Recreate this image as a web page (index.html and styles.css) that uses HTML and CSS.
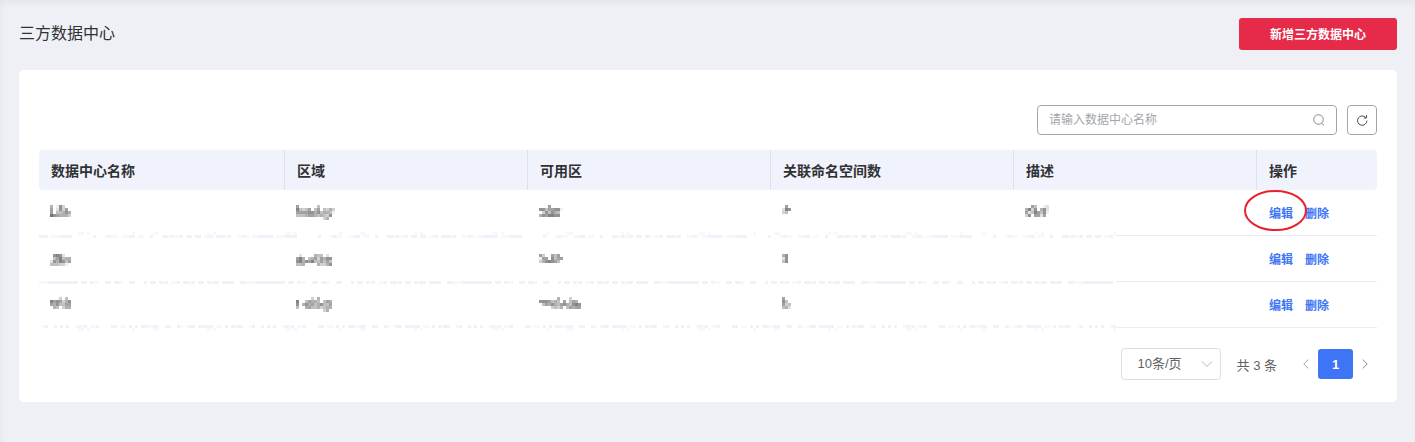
FILE: index.html
```html
<!DOCTYPE html>
<html lang="zh-CN">
<head>
    <meta charset="UTF-8">
    <meta name="viewport" content="width=device-width, initial-scale=1.0">
    <title>三方数据中心</title>
    <link rel="stylesheet" href="styles.css">
</head>
<body>
    <header class="page-header">
        <h1>三方数据中心</h1>
        <button class="btn-primary" type="button">新增三方数据中心</button>
    </header>

    <main class="card">
        <div class="toolbar">
            <div class="search">
                <input type="text" aria-label="数据中心名称" placeholder="请输入数据中心名称">
                <svg width="12" height="12" viewBox="0 0 12 12" fill="none" stroke="#85888f">
                    <circle cx="5.5" cy="5.5" r="4.8"/>
                    <path d="M8.6 9.4l2.4 1.8"/>
                </svg>
            </div>
            <button class="btn-refresh" type="button" aria-label="刷新">
                <svg width="12" height="12" viewBox="0 0 12 12" fill="none" stroke="#4c4f55">
                    <path d="M10.9 6.6A4.7 4.7 0 1 1 9.8 3.6"/>
                    <path d="M10.5 1.2v2.8H7.8"/>
                </svg>
            </button>
        </div>

        <table>
            <thead>
                <tr>
                    <th class="col-name">数据中心名称</th>
                    <th>区域</th>
                    <th>可用区</th>
                    <th>关联命名空间数</th>
                    <th>描述</th>
                    <th class="col-action">操作</th>
                </tr>
            </thead>
            <tbody>
                <tr>
                    <td data-mosaic="5017300 6027360 6044575 9765553"><div class="strip"></div></td>
                    <td data-mosaic="6000000400000 8434604604353 6666775745541 4445665454370 0000000003500"></td>
                    <td data-mosaic="00060000 77466771 03747540 57688770"></td>
                    <td data-mosaic="060 287 340"></td>
                    <td data-mosaic="00640012 58370572 62486471 37066260"></td>
                    <td class="actions">
                        <a href="#">编辑</a><a href="#">删除</a>
                        <svg class="mark" width="64" height="42" viewBox="0 0 64 42" fill="none" stroke="#e8202b" stroke-width="2">
                            <ellipse cx="31.5" cy="20.5" rx="30.5" ry="19.5"/>
                        </svg>
                    </td>
                </tr>
                <tr>
                    <td data-mosaic="0000000 0787200 0468455 2758746 4443310"><div class="strip"></div></td>
                    <td data-mosaic="000000000000 020000544020 685045636577 785768446464 445000053357"></td>
                    <td data-mosaic="00000000 63006460 16607466 35787640"></td>
                    <td data-mosaic="000 570 270 470"></td>
                    <td></td>
                    <td class="actions"><a href="#">编辑</a><a href="#">删除</a></td>
                </tr>
                <tr>
                    <td data-mosaic="0003040 8676357 6574466 0540355"><div class="strip strip-last"></div></td>
                    <td data-mosaic="000003050000 800465540465 705756457446 400564453455 000000000350"></td>
                    <td data-mosaic="000000500030000 777645406046500 046575467547870 000034350465660"></td>
                    <td data-mosaic="600 740 634 452"></td>
                    <td></td>
                    <td class="actions"><a href="#">编辑</a><a href="#">删除</a></td>
                </tr>
            </tbody>
        </table>

        <div class="pagination">
            <div class="page-size">
                <select aria-label="每页条数">
                    <option>10条/页</option>
                </select>
                <svg width="12" height="8" viewBox="0 0 12 8" fill="none" stroke="#b0b3ba">
                    <path d="M1 1.5l5 5 5-5"/>
                </svg>
            </div>
            <span class="total">共 3 条</span>
            <button class="arrow" type="button" aria-label="上一页">
                <svg width="6" height="10" viewBox="0 0 6 10" fill="none" stroke="#a0a3aa">
                    <path d="M5.2 0.6L0.8 5l4.4 4.4"/>
                </svg>
            </button>
            <button class="page-current" type="button">1</button>
            <button class="arrow" type="button" aria-label="下一页">
                <svg width="6" height="10" viewBox="0 0 6 10" fill="none" stroke="#85888f">
                    <path d="M0.8 0.6L5.2 5 0.8 9.4"/>
                </svg>
            </button>
        </div>
    </main>

    <script src="mosaic.js"></script>
</body>
</html>
```

FILE: styles.css
```css
* {
    box-sizing: border-box;
}
body {
    margin: 0;
    min-height: 100vh;
    padding: 18px 18px 40px 19px;
    background-color: #eff0f5;
    box-shadow: inset 2px 4px 10px -4px rgba(0, 0, 0, 0.08);
    font-family: "Liberation Sans", "Noto Sans CJK SC", sans-serif;
    font-size: 13px;
    color: #303133;
}
button, input, select {
    font-family: inherit;
}
button {
    cursor: pointer;
}
.page-header {
    display: flex;
    justify-content: space-between;
    align-items: center;
    margin-bottom: 20px;
}
h1 {
    margin: 0;
    font-size: 16px;
    font-weight: 400;
    line-height: 24px;
}
.btn-primary {
    height: 32px;
    padding: 0 31px 2px;
    border: none;
    border-radius: 3px;
    background-color: #e52b49;
    color: #fff;
    font-size: 12px;
    font-weight: 700;
}
.card {
    padding: 35px 20px 22px;
    border-radius: 5px;
    background-color: #fff;
}
.toolbar {
    display: flex;
    justify-content: flex-end;
    gap: 10px;
    margin-bottom: 15px;
}
.search {
    display: flex;
    align-items: center;
    width: 300px;
    height: 30px;
    padding: 0 11px;
    border: 1px solid #a2a5b1;
    border-radius: 4px;
}
.search input {
    flex: 1;
    min-width: 0;
    padding: 0;
    border: none;
    outline: none;
    background: none;
    font-size: 12px;
}
.search input::placeholder {
    color: #a3a6ad;
}
.btn-refresh {
    display: flex;
    justify-content: center;
    align-items: center;
    width: 30px;
    height: 30px;
    padding: 0;
    border: 1px solid #a2a5b1;
    border-radius: 4px;
    background-color: #fff;
}

table {
    width: 100%;
    table-layout: fixed;
    border-spacing: 0;
}
th {
    height: 40px;
    padding: 0 12px;
    border-right: 1px solid #dfe2ec;
    background-color: #f0f3fc;
    font-size: 14px;
    font-weight: 700;
    text-align: left;
}
th:first-child {
    border-radius: 4px 0 0 4px;
}
th:last-child {
    border-right: none;
    border-radius: 0 4px 4px 0;
}
.col-name {
    width: 246px;
}
.col-action {
    width: 120px;
}
tbody tr {
    position: relative;
}
td {
    height: 46px;
    padding: 0 11px;
    border-bottom: 1px solid #ebedf4;
}
.mosaic {
    display: block;
}
.strip {
    position: absolute;
    left: 0;
    bottom: -2px;
    width: 80.5%;
    height: 6px;
    overflow: hidden;
    background-color: #fff;
}
.strip-last {
    bottom: -3px;
}
.actions {
    position: relative;
    padding: 0 12px;
    font-size: 12px;
    font-weight: 700;
}
.actions a {
    margin-right: 12px;
    color: #3d75f6;
    text-decoration: none;
}
.mark {
    position: absolute;
    left: -13px;
    top: 0;
    pointer-events: none;
}

.pagination {
    display: flex;
    justify-content: flex-end;
    align-items: center;
    margin-top: 20px;
    color: #606266;
}
.page-size {
    position: relative;
    margin-right: 16px;
}
.page-size select {
    display: block;
    width: 100px;
    height: 32px;
    padding: 0 16px 2px;
    border: 1px solid #dcdfe6;
    border-radius: 4px;
    appearance: none;
    background-color: #fff;
    color: #606266;
    font-size: 13px;
}
.page-size svg {
    position: absolute;
    right: 8px;
    top: 12px;
    pointer-events: none;
}
.total {
    margin-right: 17px;
}
.arrow {
    display: flex;
    justify-content: center;
    align-items: center;
    width: 24px;
    height: 30px;
    padding: 0;
    border: none;
    background: none;
}
.page-current {
    width: 35px;
    height: 30px;
    padding: 0;
    border: none;
    border-radius: 3px;
    background-color: #3d75f6;
    color: #fff;
    font-size: 13px;
    font-weight: 700;
}
```

FILE: mosaic.js
```js
const BLOCK = 3;

// rows of digits, 0 is empty and 9 is the darkest block
function mosaic(rows, height, shade) {
    let rects = "";
    rows.forEach((row, y) => {
        [...row].forEach((d, x) => {
            if (d !== "0") {
                rects += `<rect x="${x * BLOCK}" y="${y * BLOCK}" width="${BLOCK}" height="${BLOCK}" fill="${shade(Number(d))}"/>`;
            }
        });
    });
    return `<svg class="mosaic" aria-hidden="true" width="${rows[0].length * BLOCK}" height="${height}" shape-rendering="crispEdges">${rects}</svg>`;
}

document.querySelectorAll("[data-mosaic]").forEach((cell) => {
    const gray = (d) => `rgba(48, 49, 51, ${d * 0.075})`;
    cell.insertAdjacentHTML("afterbegin", mosaic(cell.dataset.mosaic.split(" "), 15, gray));
});

const sparse = "000000000000011010000000000000010000001100000000000000001010000000000";
const dense = [
    "222011122220000000200012110011220110020002212112022022011202221200112101122",
    "111222222222202202110022022100220002022021201120221202202122022220022",
    "012002020200121201120000220110202022112200220021012202222201102021220",
];
document.querySelectorAll(".strip").forEach((strip, i) => {
    const lines = [sparse.repeat(8), dense[i].repeat(8)];
    if (i === 1) lines[0] = "0".repeat(lines[0].length);
    if (i === 2) lines.reverse();
    strip.innerHTML = mosaic(lines, 6, (d) => (d === 2 ? "#f1f2f9" : "#f7f8fd"));
});
```
